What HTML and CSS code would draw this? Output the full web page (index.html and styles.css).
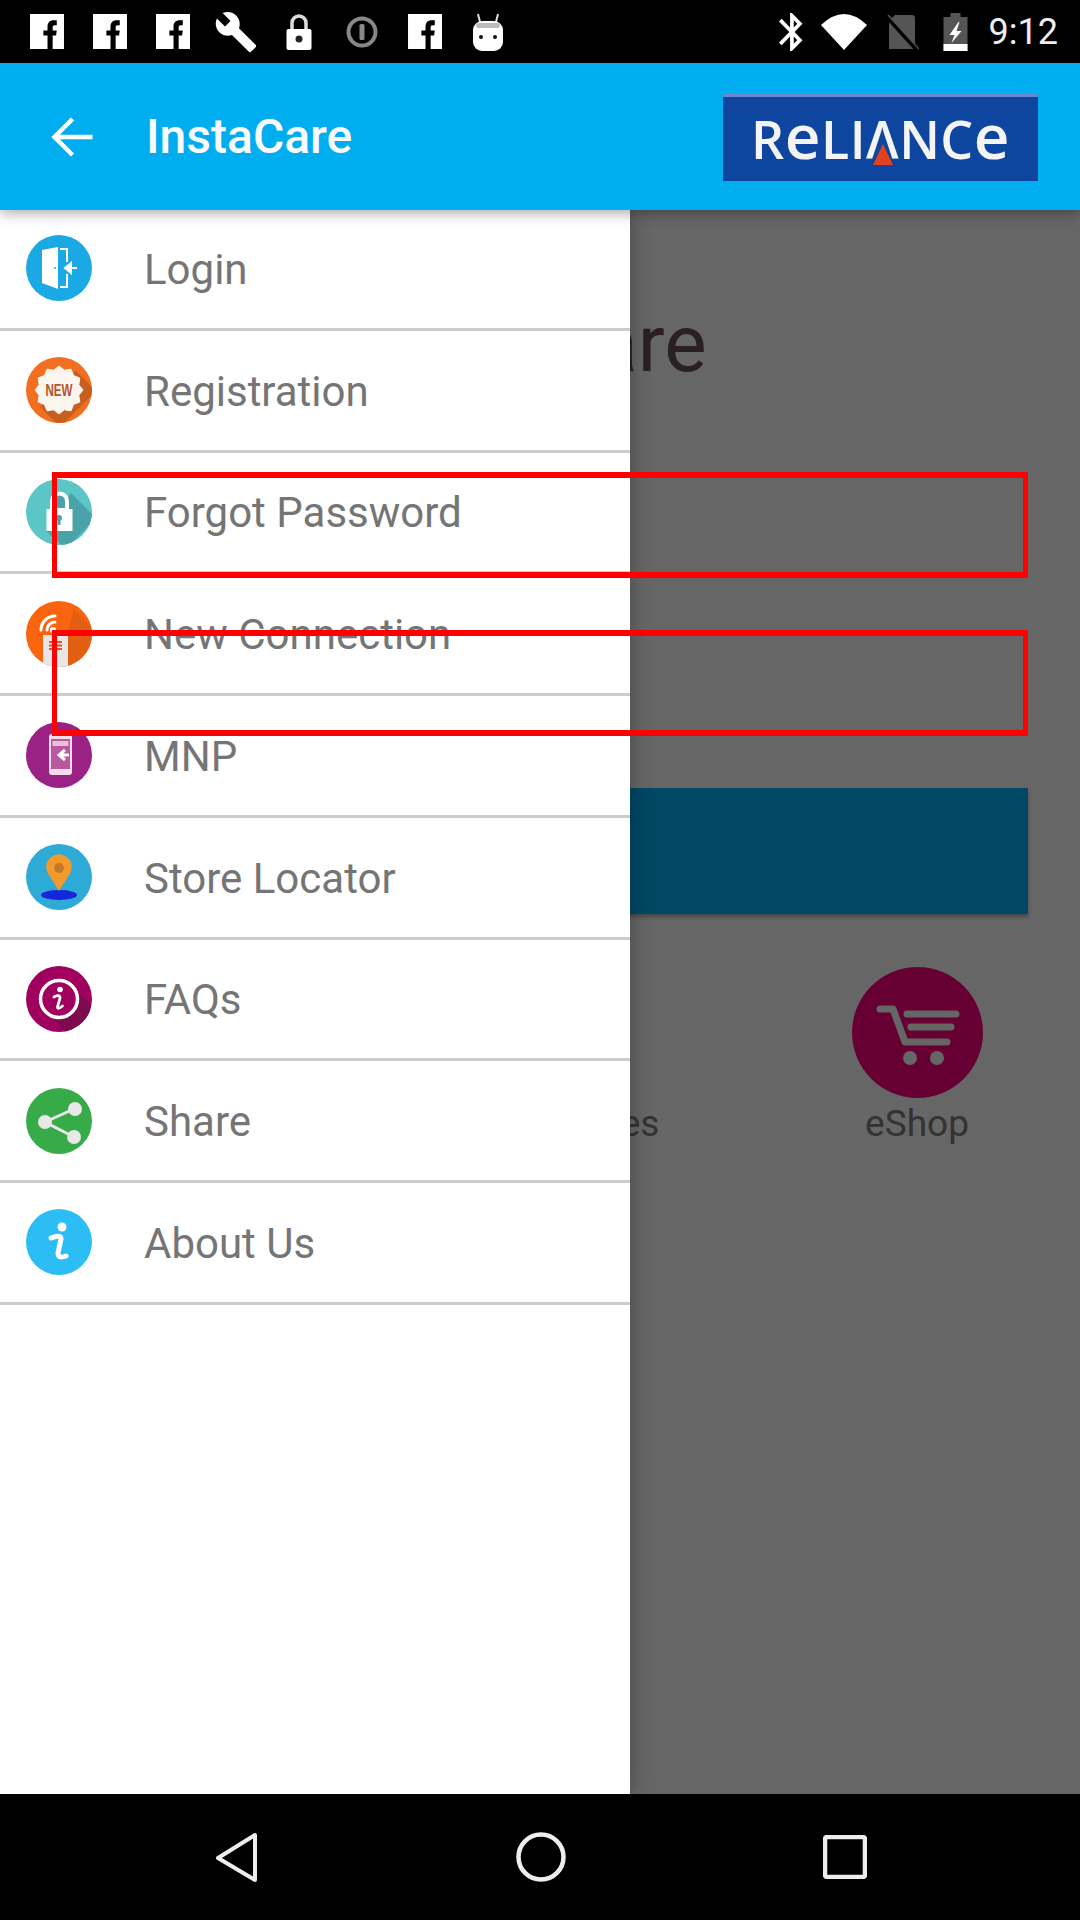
FILE: index.html
```html
<!DOCTYPE html>
<html lang="en">
<head>
	<meta charset="UTF-8">
	<title>InstaCare</title>
	<link rel="stylesheet" href="styles.css">
</head>
<body>
	<div id="phone">
		<div id="statusbar">
			<div class="notes">
				<span class="note"><svg width="34" height="35" viewBox="0 0 33 34"><rect width="33" height="34" fill="#fff"/><path d="M17 34V21h-4v-5h4v-4c0-4 2.500-6 6-6h3v5h-2c-1.500 0-2 .7-2 2v3h4l-.7 5H22v13z" fill="#000"/></svg></span>
				<span class="note"><svg width="34" height="35" viewBox="0 0 33 34"><rect width="33" height="34" fill="#fff"/><path d="M17 34V21h-4v-5h4v-4c0-4 2.500-6 6-6h3v5h-2c-1.500 0-2 .7-2 2v3h4l-.7 5H22v13z" fill="#000"/></svg></span>
				<span class="note"><svg width="34" height="35" viewBox="0 0 33 34"><rect width="33" height="34" fill="#fff"/><path d="M17 34V21h-4v-5h4v-4c0-4 2.500-6 6-6h3v5h-2c-1.500 0-2 .7-2 2v3h4l-.7 5H22v13z" fill="#000"/></svg></span>
				<span class="note"><svg width="44" height="44" viewBox="0 0 24 24"><path d="M22.700 19l-9.100-9.100c.9-2.300.4-5-1.500-6.900-2-2-5-2.400-7.400-1.300L9 6 6 9 1.600 4.700C.4 7.100.9 10.100 2.900 12.100c1.900 1.900 4.600 2.400 6.900 1.500l9.100 9.100c.4.4 1 .4 1.400 0l2.300-2.300c.5-.4.5-1.100.1-1.400z" fill="#fff"/></svg></span>
				<span class="note"><svg width="26" height="36" viewBox="0 0 25 36"><path d="M5.500 16V9a7 7 0 0 1 14 0v7" fill="none" stroke="#ddd" stroke-width="3.500"/><rect y="15" width="25" height="21" rx="2" fill="#fff"/><circle cx="12.500" cy="25" r="3.500" fill="#222"/></svg></span>
				<span class="note"><svg width="32" height="32" viewBox="0 0 32 32"><circle cx="16" cy="16" r="13.500" fill="none" stroke="#888" stroke-width="4"/><rect x="13.500" y="8" width="5" height="16" rx="1.500" fill="#888"/></svg></span>
				<span class="note"><svg width="34" height="35" viewBox="0 0 33 34"><rect width="33" height="34" fill="#fff"/><path d="M17 34V21h-4v-5h4v-4c0-4 2.500-6 6-6h3v5h-2c-1.500 0-2 .7-2 2v3h4l-.7 5H22v13z" fill="#000"/></svg></span>
				<span class="note"><svg width="30" height="38" viewBox="0 0 30 38"><path d="M7 9L5 1M23 9l2-8" stroke="#ddd" stroke-width="2"/><rect y="8" width="30" height="30" rx="9" fill="#fff"/><rect x="3" y="10" width="24" height="5" rx="2.500" fill="#bbb"/><circle cx="8" cy="24" r="2" fill="#111"/><circle cx="22" cy="24" r="2" fill="#111"/></svg></span>
			</div>
			<div class="sysicons">
				<svg width="24" height="38" viewBox="5 2 13 20" preserveAspectRatio="none"><path d="M17.710 7.710L12 2h-1v7.590L6.410 5 5 6.410 10.590 12 5 17.590 6.410 19 11 14.410V22h1l5.710-5.710-4.300-4.290 4.300-4.290zM13 5.830l1.880 1.880L13 9.590V5.830zm1.880 10.460L13 18.170v-3.760l1.880 1.880z" fill="#fff"/></svg>
				<svg class="wifi" width="46" height="36" viewBox="0 0 46 36"><path d="M0 11Q23-11 46 11L23 36z" fill="#fff"/></svg>
				<svg class="sim" width="34" height="36" viewBox="0 0 34 36"><path d="M10 1h17q3 0 3 3v29q0 2-3 2H4V7z" fill="#555"/><path d="M1 2l30 33" stroke="#000" stroke-width="4"/><path d="M3 1l31 34" stroke="#555" stroke-width="1.500"/></svg>
				<svg class="batt" width="25" height="38" viewBox="0 0 24 38"><rect x="7" width="10" height="4" fill="#555"/><rect y="4" width="24" height="34" fill="#555"/><rect y="31" width="24" height="7" fill="#fff"/><path d="M15 9L6 22h5l-3 8 10-12h-5l3-9z" fill="#fff"/></svg>
				<span class="clock">9:12</span>
			</div>
		</div>

		<div id="appbar">
			<svg class="back" width="43" height="42" viewBox="0 0 42 42"><path d="M41 21H4M21 3L3 21l18 18" fill="none" stroke="#fff" stroke-width="4.500"/></svg>
			<h1 class="apptitle">InstaCare</h1>
			<div class="logo">
				<span class="logotext">R<span class="loge">e</span>LI<span class="loga">Λ<i class="logotri"></i></span>NC<span class="loge">e</span></span>
			</div>
		</div>

		<div id="main">
			<div class="content">
				<h2 class="bigtitle">InstaCare</h2>
				<div class="field"></div>
				<div class="field"></div>
				<div class="bigbtn"></div>
				<div class="tiles">
					<div class="tile">
						<div class="tileicon"></div>
					</div>
					<div class="tile">
						<div class="tileicon"></div>
						<span class="tilename">Other Services</span>
					</div>
					<div class="tile">
						<div class="tileicon">
							<svg width="131" height="131" viewBox="0 0 131 131"><path d="M28 42h13l12 33M55 47h49M59 60h40M54 75h41" fill="none" stroke="#fff" stroke-width="7" stroke-linecap="round" stroke-linejoin="round"/><circle cx="58" cy="91" r="7" fill="#fff"/><circle cx="85" cy="91" r="7" fill="#fff"/></svg>
						</div>
						<span class="tilename">eShop</span>
					</div>
				</div>
			</div>

			<div class="scrim"></div>

			<ul class="drawer">
				<li>
					<svg class="icon" viewBox="0 0 66 66"><rect width="66" height="66" fill="#1aa9e4"/><path d="M16 15l16-3v42l-16-6z" fill="#fff"/><circle cx="29" cy="33" r="1" fill="#1aa9e4"/><path d="M34 14h7v13M41 39v13h-7" fill="none" stroke="#fff" stroke-width="2"/><path d="M51 33H45M45 28l-6 5 6 5z" fill="#fff" stroke="#fff" stroke-width="2"/></svg>
					<span>Login</span>
				</li>
				<li>
					<svg class="icon" viewBox="0 0 66 66"><rect width="66" height="66" fill="#f26f21"/><path d="M50 14L70 34 34 70 14 50z" fill="#c85f1f"/><polygon transform="translate(33 33)" points="24,0 19.800,5.300 20.800,12 14.500,14.500 12,20.800 5.300,19.800 0,24 -5.300,19.800 -12,20.800 -14.500,14.500 -20.800,12 -19.800,5.300 -24,0 -19.800,-5.300 -20.800,-12 -14.500,-14.500 -12,-20.800 -5.300,-19.800 0,-24 5.300,-19.800 12,-20.800 14.500,-14.500 20.800,-12 19.800,-5.300" fill="#fbf5ef" stroke="#fbf5ef" stroke-linejoin="round"/><text class="newtag" x="33" y="39" text-anchor="middle" textLength="27" lengthAdjust="spacingAndGlyphs">NEW</text></svg>
					<span>Registration</span>
				</li>
				<li>
					<svg class="icon" viewBox="0 0 66 66"><rect width="66" height="66" fill="#5cc6c6"/><path d="M45 14L70 39 40 70 20 52z" fill="#4aa3a8"/><path d="M26 31V22a7.500 7.500 0 0 1 15 0v9z" fill="#4aa3a8" stroke="#fff" stroke-width="4"/><rect x="20.500" y="30" width="26" height="22" fill="#fff"/><circle cx="33" cy="39" r="3" fill="#4aa3a8"/><path d="M33 39v7" stroke="#4aa3a8" stroke-width="3"/></svg>
					<span>Forgot Password</span>
				</li>
				<li>
					<svg class="icon" viewBox="0 0 66 66"><rect width="66" height="66" fill="#f9650f"/><path d="M48 8L70 30V70H42V30z" fill="#e25e10"/><rect x="17" y="34" width="25" height="32" fill="#e6e6e6"/><path d="M23 41h13M23 44.500h13M23 48h13" stroke="#e2552b" stroke-width="2"/><path d="M21 29a8 8 0 0 1 8-8M15 29a14 14 0 0 1 14-14" fill="none" stroke="#fff" stroke-width="3" stroke-linecap="round"/><circle cx="27" cy="29" r="3" fill="#fff"/></svg>
					<span>New Connection</span>
				</li>
				<li>
					<svg class="icon" viewBox="0 0 66 66"><rect width="66" height="66" fill="#9b2285"/><rect x="23" y="12" width="23" height="41" rx="3" fill="#f3dcec"/><rect x="25" y="17" width="19" height="30" fill="#b9579f"/><rect x="26.500" y="19" width="16" height="5" fill="#e8bfdc"/><path d="M43 33h-8M39 28l-6 5 6 5" fill="none" stroke="#fff" stroke-width="3"/></svg>
					<span>MNP</span>
				</li>
				<li>
					<svg class="icon" viewBox="0 0 66 66"><rect width="66" height="66" fill="#2eaad6"/><ellipse cx="33" cy="51" rx="18" ry="5" fill="#1426d8"/><path d="M33 47L22 29.500a12.800 12.800 0 1 1 22 0z" fill="#f39a2c"/><circle cx="33" cy="24" r="5" fill="#c47a28"/></svg>
					<span>Store Locator</span>
				</li>
				<li>
					<svg class="icon" viewBox="0 0 66 66"><rect width="66" height="66" fill="#a0005e"/><path d="M46 20L70 44 44 70 20 46z" fill="#7d0a4f"/><circle cx="33" cy="33" r="18.500" fill="#a0005e" stroke="#fff" stroke-width="3.500"/><circle cx="34" cy="23.500" r="2.800" fill="#fff"/><path d="M28 31q6-3 6 1l-2.500 9q0 3 5-1" fill="none" stroke="#fff" stroke-width="2.800" stroke-linecap="round"/></svg>
					<span>FAQs</span>
				</li>
				<li>
					<svg class="icon" viewBox="0 0 66 66"><rect width="66" height="66" fill="#37ab47"/><path d="M48 21L19 34l29 15" fill="none" stroke="#e8e8e8" stroke-width="3"/><circle cx="49" cy="21" r="7" fill="#e8e8e8"/><circle cx="19" cy="34" r="7" fill="#e8e8e8"/><circle cx="48" cy="49" r="7" fill="#e8e8e8"/></svg>
					<span>Share</span>
				</li>
				<li>
					<svg class="icon" viewBox="0 0 66 66"><rect width="66" height="66" fill="#2dbdf5"/><circle cx="36" cy="18" r="4.500" fill="#fff"/><path d="M25 29q10-4 10 1l-3 14q0 6 8 3" fill="none" stroke="#fff" stroke-width="5" stroke-linecap="round"/></svg>
					<span>About Us</span>
				</li>
			</ul>
		</div>

		<div id="navbar">
			<svg width="44" height="51" viewBox="0 0 44 51"><path d="M40 3v45L3 26z" fill="none" stroke="#eee" stroke-width="4" stroke-linejoin="round"/></svg>
			<svg width="50" height="50" viewBox="0 0 50 50"><circle cx="25" cy="25" r="22.500" fill="none" stroke="#eee" stroke-width="4.500"/></svg>
			<svg width="44" height="44" viewBox="0 0 44 44"><rect x="2" y="2" width="40" height="40" rx="2" fill="none" stroke="#eee" stroke-width="4.500"/></svg>
		</div>
	</div>
</body>
</html>
```

FILE: styles.css
```css
*{
	box-sizing: border-box;
}
body{
	margin: 0;
	font-family: Roboto, "Liberation Sans", sans-serif;
}
#phone{
	width: 1080px;
	height: 1920px;
	display: flex;
	flex-direction: column;
	overflow: hidden;
	background: #fff;
}

/* status bar */
#statusbar{
	height: 63px;
	flex: none;
	background: #000;
	display: flex;
	justify-content: space-between;
	align-items: center;
	padding: 0 22px 0 15px;
	position: relative;
	z-index: 5;
}
.notes{
	display: flex;
}
.note{
	width: 63px;
	display: flex;
	justify-content: center;
	align-items: center;
}
.note svg, .sysicons svg{
	display: block;
}
.sysicons{
	display: flex;
	align-items: center;
	gap: 18px;
}
.sim{
	margin-right: 6px;
}
.batt{
	margin-right: 3px;
}
.clock{
	color: #eee;
	font-size: 36px;
	line-height: 40px;
}

/* app bar */
#appbar{
	height: 147px;
	flex: none;
	background: #00aeef;
	display: flex;
	align-items: center;
	padding: 0 42px 0 51px;
	box-shadow: 0 4px 12px rgba(0,0,0,.3);
	position: relative;
	z-index: 4;
}
.back{
	flex: none;
}
.apptitle{
	margin: 0 0 0 52px;
	flex: 1;
	color: #fafafa;
	font-size: 48px;
	font-weight: 500;
}
.logo{
	width: 315px;
	height: 88px;
	background: #0e469f;
	border-top: 4px solid #6a86cf;
	display: flex;
	align-items: center;
	justify-content: center;
}
.logotext{
	color: #f4f4f4;
	font-family: "Open Sans", sans-serif;
	font-size: 52px;
	line-height: 50px;
	font-weight: 600;
	letter-spacing: .5px;
}
.loge{
	font-size: 62px;
	line-height: 0;
}
.loga{
	position: relative;
}
.logotri{
	position: absolute;
	left: 50%;
	bottom: 9px;
	margin-left: -10px;
	width: 0;
	height: 0;
	border-left: 10px solid transparent;
	border-right: 10px solid transparent;
	border-bottom: 21px solid #e2431e;
}

/* page behind the drawer */
#main{
	flex: 1;
	position: relative;
	overflow: hidden;
}
.content{
	padding: 0 52px;
}
.bigtitle{
	margin: 0;
	padding: 76px 8px 0 0;
	height: 262px;
	text-align: center;
	color: #695055;
	font-size: 80px;
	line-height: 116px;
	font-weight: 400;
}
.field{
	height: 106px;
	margin-bottom: 52px;
	border: 5px solid #f00;
	border-top-width: 6px;
	border-bottom-width: 6px;
	position: relative;
	z-index: 3;
}
.bigbtn{
	height: 126px;
	background: #00b5f8;
	box-shadow: 0 3px 4px rgba(0,0,0,.3);
}
.tiles{
	display: flex;
	justify-content: space-between;
	margin: 53px -20px 0;
}
.tile{
	width: 262px;
	display: flex;
	flex-direction: column;
	align-items: center;
}
.tileicon{
	width: 131px;
	height: 131px;
	border-radius: 50%;
	background: #ff0080;
}
.tileicon svg{
	display: block;
}
.tilename{
	margin-top: 6px;
	color: #808080;
	font-size: 37px;
	line-height: 40px;
	white-space: nowrap;
}
.scrim{
	position: absolute;
	top: 0;
	left: 0;
	right: 0;
	bottom: 0;
	background: rgba(0,0,0,.6);
}

/* drawer */
.drawer{
	position: absolute;
	top: -1px;
	left: 0;
	bottom: 0;
	width: 630px;
	margin: 0;
	padding: 0;
	list-style: none;
	background: #fff;
	box-shadow: 0 0 20px rgba(0,0,0,.3);
}
.drawer li{
	height: 121.75px;
	display: flex;
	align-items: center;
	padding-left: 26px;
	border-bottom: 3px solid #ccc;
	color: #757575;
	font-size: 42px;
}
.drawer li span{
	margin: 2px 0 0 52px;
}
.icon{
	width: 66px;
	height: 66px;
	flex: none;
	border-radius: 50%;
}
.newtag{
	fill: #b5532a;
	font-family: "Liberation Sans", sans-serif;
	font-size: 17px;
	font-weight: 700;
}

/* nav bar */
#navbar{
	height: 126px;
	flex: none;
	background: #000;
	display: flex;
	justify-content: space-between;
	align-items: center;
	padding: 0 213px 0 215px;
	position: relative;
	z-index: 5;
}
```
